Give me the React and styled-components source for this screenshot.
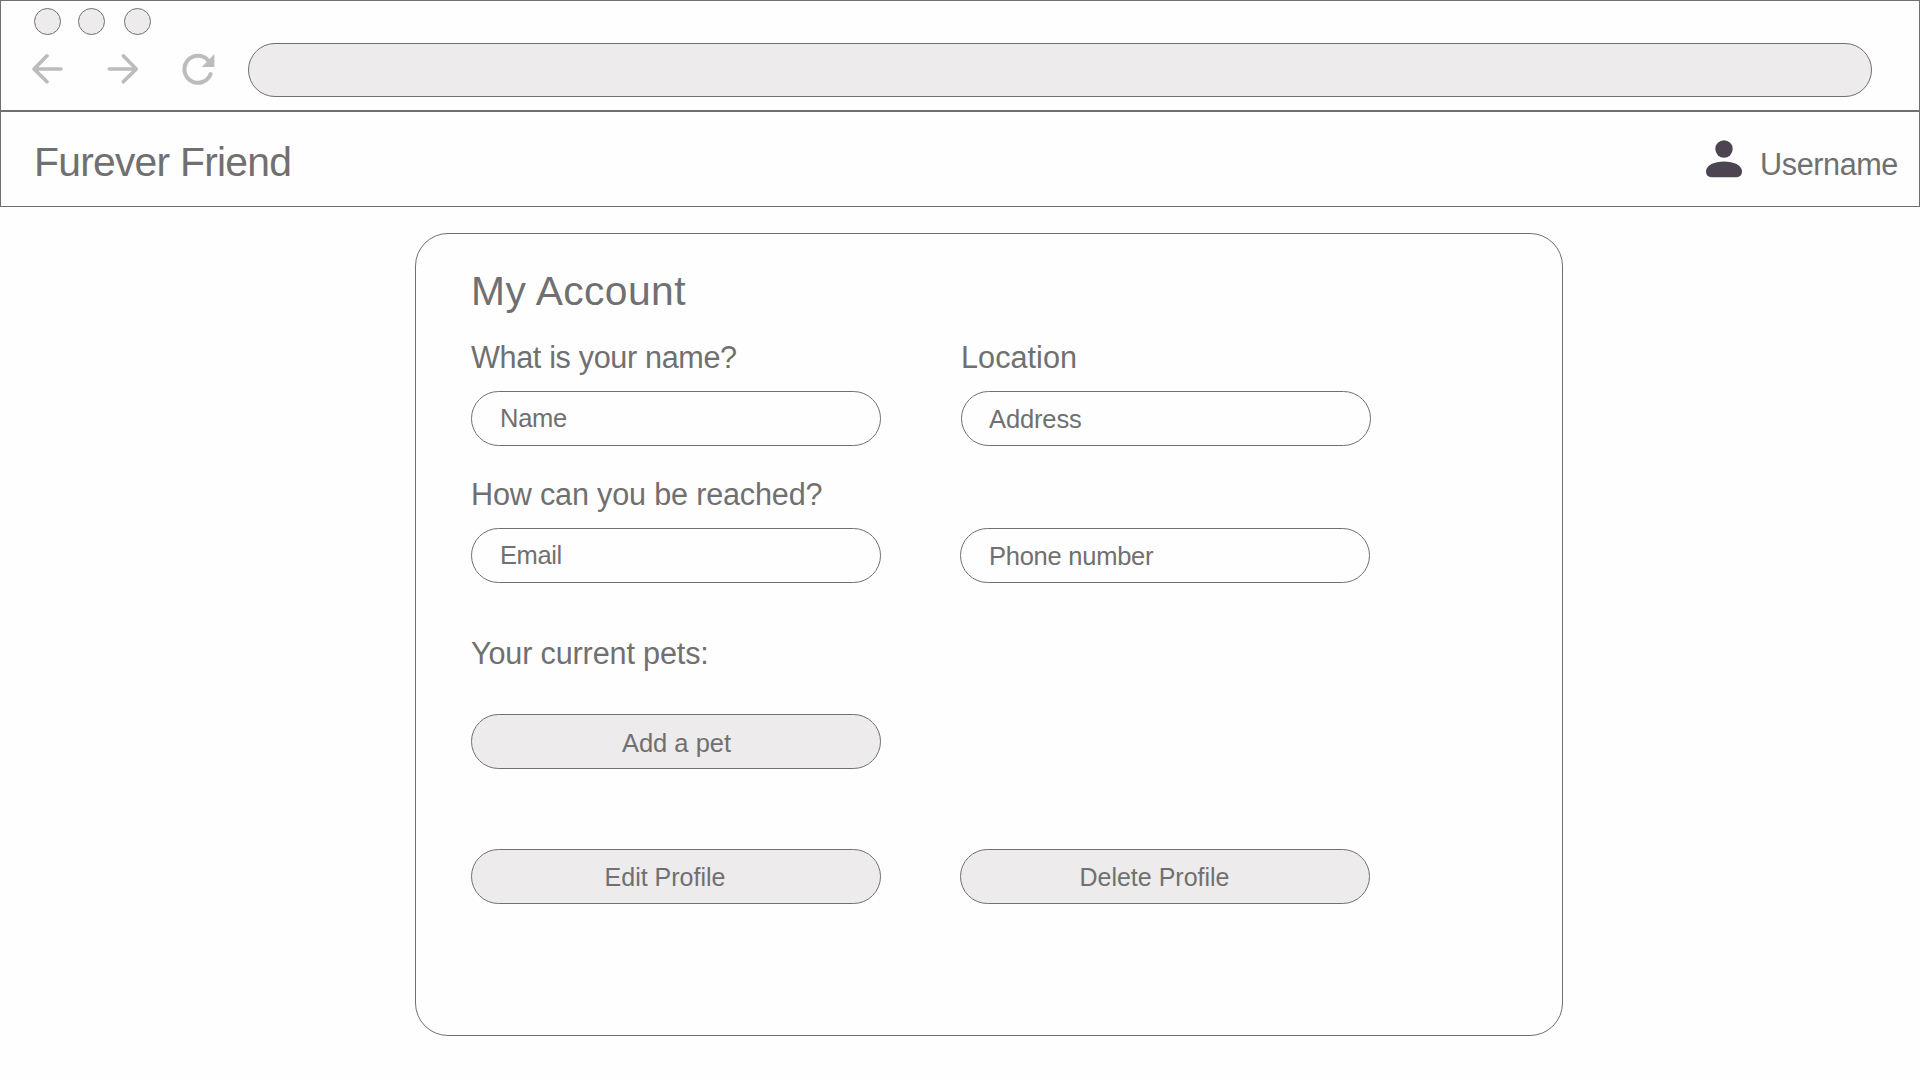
import React from "react";
import styled, { createGlobalStyle } from "styled-components";

const LINE = "#707070";
const FILL = "#edebeb";

const GlobalStyle = createGlobalStyle`
  *, *::before, *::after { box-sizing: border-box; }
  body {
    margin: 0;
    background: #fefefe;
    color: ${LINE};
    font-family: "Liberation Sans", Arial, sans-serif;
  }
`;

const Page = styled.div`
  display: flex;
  flex-direction: column;
  width: 1920px;
  height: 1080px;
  overflow: hidden;
`;

const BrowserChrome = styled.div`
  height: 111px;
  padding: 7px 47px 0 31px;
  border: 1px solid ${LINE};
  background: #fefefe;
`;

const WindowDots = styled.div`
  display: flex;
  padding-left: 2px;
`;

const Dot = styled.span`
  width: 27px;
  height: 27px;
  margin-right: ${(p) => p.$gap || 0}px;
  border: 1px solid ${LINE};
  border-radius: 50%;
  background: ${FILL};
`;

const AddressRow = styled.div`
  display: flex;
  align-items: center;
  margin-top: 8px;
`;

const NavIcons = styled.div`
  display: flex;
  gap: 43px;
  width: 216px;
  height: 32px;
  margin-top: -2px;
`;

const AddressBar = styled.div`
  flex: 1;
  height: 54px;
  border: 1px solid ${LINE};
  border-radius: 27px;
  background: ${FILL};
`;

const SiteHeader = styled.header`
  display: flex;
  justify-content: space-between;
  align-items: flex-start;
  height: 96px;
  padding: 26px 21px 0 33px;
  border: 1px solid ${LINE};
  background: #fefefe;
`;

const Brand = styled.div`
  font-size: 40.8px;
  line-height: 48px;
  letter-spacing: -0.74px;
`;

const UserLink = styled.div`
  display: flex;
  gap: 17px;
  padding-top: 2px;
`;

const Username = styled.span`
  padding-top: 6px;
  font-size: 30.6px;
  line-height: 36px;
  letter-spacing: -0.4px;
`;

const Card = styled.main`
  width: 1148px;
  height: 803px;
  margin: 26px 0 0 415px;
  padding: 33px 0 0 55px;
  border: 1px solid ${LINE};
  border-radius: 33px;
`;

const Title = styled.h1`
  margin: 0 0 24px;
  font-size: 40.8px;
  line-height: 48px;
  font-weight: 400;
  letter-spacing: 0.4px;
`;

const Row = styled.div`
  display: flex;
  align-items: flex-end;
  gap: ${(p) => p.$gap || 79}px;
  margin-bottom: ${(p) => p.$after || 0}px;
`;

const Field = styled.div`
  display: flex;
  flex-direction: column;
  width: 410px;
`;

const Label = styled.div`
  margin-bottom: ${(p) => p.$after || 16}px;
  font-size: 30.6px;
  line-height: 36px;
  white-space: nowrap;
  letter-spacing: ${(p) => p.$tracking || 0}px;
`;

const Pill = styled.div`
  width: 410px;
  height: 55px;
  border: 1px solid ${LINE};
  border-radius: 27.5px;
  line-height: 30px;
`;

const Input = styled(Pill)`
  padding: ${(p) => p.$top}px 27px 0 ${(p) => p.$left || 27}px;
  font-size: 25.5px;
  letter-spacing: ${(p) => p.$tracking}px;
`;

const Button = styled(Pill)`
  padding: ${(p) => p.$top || 12}px ${(p) => p.$right || 0}px 0 ${(p) => p.$left || 0}px;
  background: ${FILL};
  font-size: ${(p) => p.$size || 25}px;
  text-align: center;
`;

const ArrowLeft = () => (
  <svg width="32" height="32" viewBox="0 0 32 32" fill="none" stroke="#bcbcbe" strokeWidth="3.6" strokeLinecap="round" strokeLinejoin="round">
    <path d="M29 16H2.5M15 2.8L2 16L15 28.8" />
  </svg>
);

const ArrowRight = () => (
  <svg width="32" height="32" viewBox="0 0 32 32" fill="none" stroke="#bcbcbe" strokeWidth="3.6" strokeLinecap="round" strokeLinejoin="round">
    <path d="M2.3 16H28.8M16.3 2.8L29.3 16L16.3 28.8" />
  </svg>
);

const Reload = () => (
  <svg width="33" height="32" viewBox="0 0 33 32">
    <path d="M26.3 7.6A13.5 13.5 0 1 0 28.6 21" fill="none" stroke="#bcbcbe" strokeWidth="4" strokeLinecap="round" />
    <path d="M32.4 1V14H19.8Z" fill="#bcbcbe" />
  </svg>
);

const Person = () => (
  <svg width="38" height="38" viewBox="0 0 38 38" fill="#4c4551">
    <circle cx="19" cy="9" r="8.7" />
    <path d="M1 31.5C1 25.2 9.5 21.6 19 21.6S37 25.2 37 31.5C37 35 34.8 37.2 31.5 37.2H6.5C3.2 37.2 1 35 1 31.5Z" />
  </svg>
);

export default function App() {
  return (
    <Page>
      <GlobalStyle />
      <BrowserChrome>
        <WindowDots>
          <Dot $gap={17} />
          <Dot $gap={19} />
          <Dot />
        </WindowDots>
        <AddressRow>
          <NavIcons>
            <ArrowLeft />
            <ArrowRight />
            <Reload />
          </NavIcons>
          <AddressBar />
        </AddressRow>
      </BrowserChrome>
      <SiteHeader>
        <Brand>Furever Friend</Brand>
        <UserLink>
          <Person />
          <Username>Username</Username>
        </UserLink>
      </SiteHeader>
      <Card>
        <Title>My Account</Title>
        <Row $gap={80} $after={30}>
          <Field>
            <Label $tracking={-0.35}>What is your name?</Label>
            <Input $top={11} $left={28} $tracking={-0.28}>Name</Input>
          </Field>
          <Field>
            <Label $tracking={0.05}>Location</Label>
            <Input $top={12} $tracking={-0.13}>Address</Input>
          </Field>
        </Row>
        <Row $after={52}>
          <Field>
            <Label $tracking={-0.18}>How can you be reached?</Label>
            <Input $top={11} $left={28} $tracking={-0.4}>Email</Input>
          </Field>
          <Field>
            <Input $top={12} $left={28} $tracking={-0.25}>Phone number</Input>
          </Field>
        </Row>
        <Label $tracking={-0.15} $after={43}>Your current pets:</Label>
        <Row $after={80}>
          <Button $top={13} $left={1} $size={25.5}>Add a pet</Button>
        </Row>
        <Row>
          <Button $right={22}>Edit Profile</Button>
          <Button $right={21}>Delete Profile</Button>
        </Row>
      </Card>
    </Page>
  );
}
